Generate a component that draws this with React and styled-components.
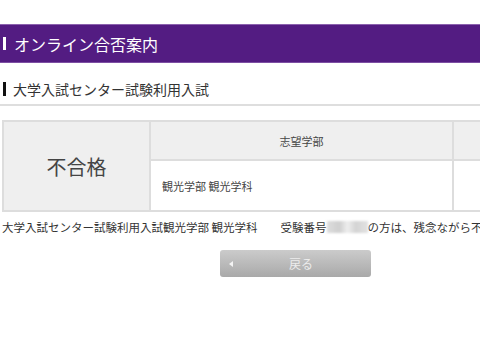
import React from "react";
import styled, { createGlobalStyle } from "styled-components";

const GlobalStyle = createGlobalStyle`
  html, body {
    margin: 0;
    padding: 0;
    background: #fff;
    overflow: hidden;
  }
  body {
    font-family: "Noto Sans CJK JP", "Noto Sans", sans-serif;
    color: #333;
  }
`;

const Page = styled.div`
  width: 591px;
  padding-top: 24px;
`;

const TitleBar = styled.div`
  display: flex;
  align-items: center;
  height: 37px;
  background: #531c82;
  border-top: 1px solid #8c62ae;
  border-bottom: 1px solid #7d4fa3;
  color: #fff;
  font-size: 16px;
  padding-left: 3px;
`;

const Mark = styled.span`
  display: inline-block;
  width: 3px;
  height: ${(p) => p.$h}px;
  background: ${(p) => p.$color};
  margin-right: ${(p) => p.$gap}px;
`;

const SectionHead = styled.div`
  display: flex;
  align-items: center;
  margin-top: 18px;
  height: 16px;
  padding-left: 3px;
  font-size: 14px;
  color: #333;
`;

const Rule = styled.div`
  margin-top: 7px;
  border-bottom: 2px solid #dedede;
`;

const Table = styled.table`
  margin: 14px 2px 0;
  width: 587px;
  border-collapse: collapse;
  border: 2px solid #dddddd;
  table-layout: fixed;
`;

const Cell = styled.td`
  border: 2px solid #dddddd;
  background: ${(p) => (p.$head ? "#efefef" : "#fff")};
  font-size: ${(p) => p.$size || 11}px;
  color: #444;
  text-align: ${(p) => p.$align || "center"};
  padding: 0 0 0 ${(p) => p.$pad || 0}px;
  height: ${(p) => p.$h}px;
`;

const Notice = styled.p`
  margin: 7px 0 0 2px;
  font-size: 11.5px;
  white-space: nowrap;
  color: #333;
  display: flex;
  align-items: center;
`;

const Blur = styled.span`
  display: inline-block;
  width: 41px;
  height: 12px;
  background: linear-gradient(90deg, #ddd, #cfcfcf 30%, #eee 50%, #d4d4d4 70%, #e2e2e2);
  filter: blur(1px);
`;

const BackButton = styled.button`
  display: flex;
  align-items: center;
  margin: 15px auto 0;
  width: 151px;
  height: 27px;
  border: none;
  border-radius: 3px;
  background: linear-gradient(#cbcbcb, #a9a9a9);
  color: #ececec;
  font-family: inherit;
  font-size: 12px;
  padding: 0 0 0 9px;
`;

const Arrow = styled.span`
  width: 0;
  height: 0;
  border-top: 3px solid transparent;
  border-bottom: 3px solid transparent;
  border-right: 4px solid #f4f4f4;
`;

const Label = styled.span`
  flex: 1;
  text-align: center;
  padding-right: 2px;
`;

export default function App() {
  return (
    <Page>
      <GlobalStyle />
      <TitleBar>
        <Mark $h={13} $color="#fff" $gap={8} />
        オンライン合否案内
      </TitleBar>
      <SectionHead>
        <Mark $h={14} $color="#111" $gap={7} />
        大学入試センター試験利用入試
      </SectionHead>
      <Rule />
      <Table>
        <colgroup>
          <col style={{ width: 147 }} />
          <col style={{ width: 303 }} />
          <col />
        </colgroup>
        <tbody>
          <tr>
            <Cell $head $size={20} rowSpan={2}>
              不合格
            </Cell>
            <Cell $head $h={37}>
              志望学部
            </Cell>
            <Cell $head $h={37}></Cell>
          </tr>
          <tr>
            <Cell $align="left" $pad={11} $h={49}>
              観光学部 観光学科
            </Cell>
            <Cell $h={49}></Cell>
          </tr>
        </tbody>
      </Table>
      <Notice>
        大学入試センター試験利用入試観光学部 観光学科　　受験番号
        <Blur />
        の方は、残念ながら不合格でした。
      </Notice>
      <BackButton>
        <Arrow />
        <Label>戻る</Label>
      </BackButton>
    </Page>
  );
}
